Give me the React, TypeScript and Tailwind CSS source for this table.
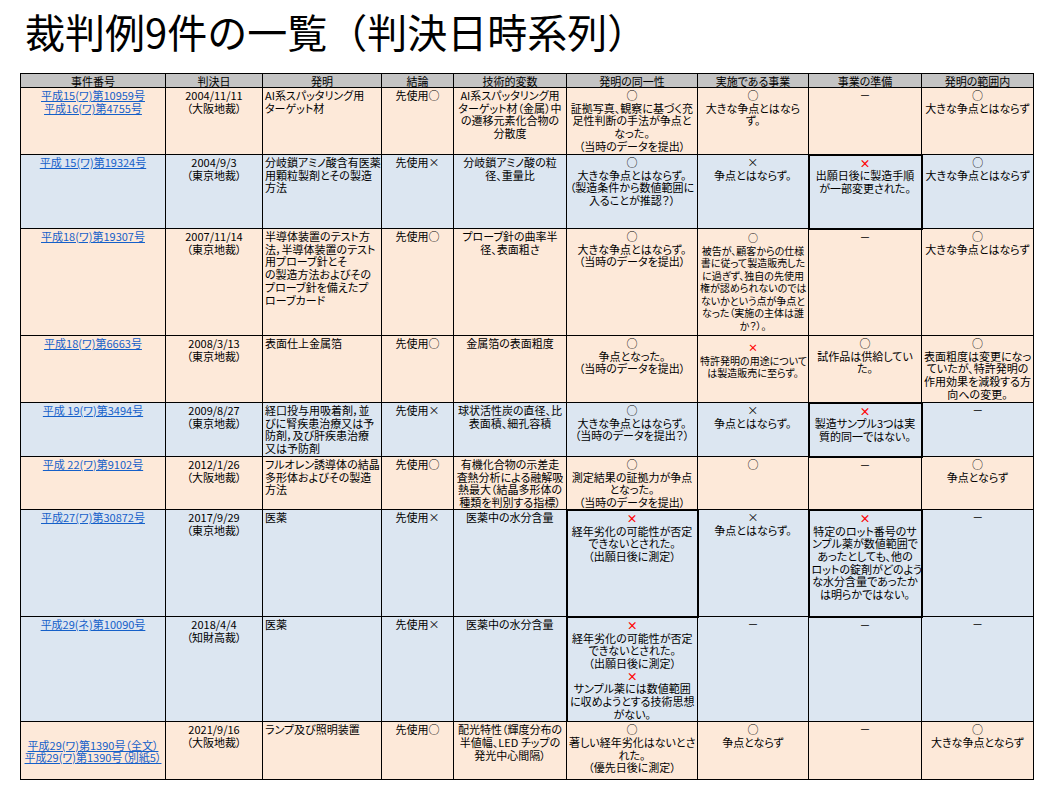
import React from "react";

type Cell = {
  l: string[];
  left?: boolean;
  extra?: string;
  small?: boolean;
};

type Row = {
  links: string[];
  linkMiddle?: boolean;
  bg: "peach" | "blue";
  h: string;
  cells: Cell[];
};

const headers = [
  "事件番号",
  "判決日",
  "発明",
  "結論",
  "技術的変数",
  "発明の同一性",
  "実施である事業",
  "事業の準備",
  "発明の範囲内",
];

const colWidths = [
  "w-[145px]",
  "w-[97px]",
  "w-[119px]",
  "w-[72px]",
  "w-[113px]",
  "w-[131px]",
  "w-[111px]",
  "w-[113px]",
  "w-[112px]",
];

// "R×" = red cross, everything else is plain text
const rows: Row[] = [
  {
    links: ["平成15(ワ)第10959号", "平成16(ワ)第4755号"],
    bg: "peach",
    h: "h-[67px]",
    cells: [
      { l: ["2004/11/11", "（大阪地裁）"] },
      { l: ["AI系スパッタリング用", "ターゲット材"], left: true },
      { l: ["先使用○"] },
      { l: ["AI系スパッタリング用", "ターゲット材（金属）中", "の遷移元素化合物の", "分散度"] },
      { l: ["○", "証拠写真、観察に基づく充", "足性判断の手法が争点と", "なった。", "（当時のデータを提出）"] },
      { l: ["○", "大きな争点とはなら", "ず。"] },
      { l: ["－"] },
      { l: ["○", "大きな争点とはならず"] },
    ],
  },
  {
    links: ["平成 15(ワ)第19324号"],
    bg: "blue",
    h: "h-[74px]",
    cells: [
      { l: ["2004/9/3", "（東京地裁）"] },
      { l: ["分岐鎖アミノ酸含有医薬", "用顆粒製剤とその製造", "方法"], left: true },
      { l: ["先使用×"] },
      { l: ["分岐鎖アミノ酸の粒", "径、重量比"] },
      { l: ["○", "大きな争点とはならず。", "（製造条件から数値範囲に", "入ることが推認？）"] },
      { l: ["×", "争点とはならず。"] },
      { l: ["R×", "出願日後に製造手順", "が一部変更された。"], extra: "border-2" },
      { l: ["○", "大きな争点とはならず"] },
    ],
  },
  {
    links: ["平成18(ワ)第19307号"],
    bg: "peach",
    h: "h-[107px]",
    cells: [
      { l: ["2007/11/14", "（東京地裁）"] },
      {
        l: [
          "半導体装置のテスト方",
          "法，半導体装置のテスト",
          "用プローブ針とそ",
          "の製造方法およびその",
          "プローブ針を備えたプ",
          "ローブカード",
        ],
        left: true,
      },
      { l: ["先使用○"] },
      { l: ["プローブ針の曲率半", "径、表面粗さ"] },
      { l: ["○", "大きな争点とはならず。", "（当時のデータを提出）"] },
      {
        l: [
          "○",
          "被告が、顧客からの仕様",
          "書に従って製造販売した",
          "に過ぎず、独自の先使用",
          "権が認められないのでは",
          "ないかという点が争点と",
          "なった（実施の主体は誰",
          "か？）。",
        ],
        small: true,
        extra: "pt-[3px]",
      },
      { l: ["－"] },
      { l: ["○", "大きな争点とはならず"] },
    ],
  },
  {
    links: ["平成18(ワ)第6663号"],
    bg: "peach",
    h: "h-[67px]",
    cells: [
      { l: ["2008/3/13", "（東京地裁）"] },
      { l: ["表面仕上金属箔"], left: true },
      { l: ["先使用○"] },
      { l: ["金属箔の表面粗度"] },
      { l: ["○", "争点となった。", "（当時のデータを提出）"] },
      { l: ["R×", "特許発明の用途について", "は製造販売に至らず。"], small: true, extra: "pt-[6px]" },
      { l: ["○", "試作品は供給してい", "た。"] },
      { l: ["○", "表面粗度は変更になっ", "ていたが、特許発明の", "作用効果を減殺する方", "向への変更。"] },
    ],
  },
  {
    links: ["平成 19(ワ)第3494号"],
    bg: "blue",
    h: "h-[54px]",
    cells: [
      { l: ["2009/8/27", "（東京地裁）"] },
      { l: ["経口投与用吸着剤，並", "びに腎疾患治療又は予", "防剤，及び肝疾患治療", "又は予防剤"], left: true },
      { l: ["先使用×"] },
      { l: ["球状活性炭の直径、比", "表面積、細孔容積"] },
      { l: ["○", "大きな争点とはならず。", "（当時のデータを提出？）"] },
      { l: ["×", "争点とはならず。"] },
      { l: ["R×", "製造サンプル3つは実", "質的同一ではない。"], extra: "border-2" },
      { l: ["－"] },
    ],
  },
  {
    links: ["平成 22(ワ)第9102号"],
    bg: "peach",
    h: "h-[52px]",
    cells: [
      { l: ["2012/1/26", "（大阪地裁）"] },
      { l: ["フルオレン誘導体の結晶", "多形体およびその製造", "方法"], left: true },
      { l: ["先使用○"] },
      { l: ["有機化合物の示差走", "査熱分析による融解吸", "熱最大（結晶多形体の", "種類を判別する指標）"] },
      { l: ["○", "測定結果の証拠力が争点", "となった。", "（当時のデータを提出）"] },
      { l: ["○"] },
      { l: ["－"] },
      { l: ["○", "争点とならず"] },
    ],
  },
  {
    links: ["平成27(ワ)第30872号"],
    bg: "blue",
    h: "h-[107px]",
    cells: [
      { l: ["2017/9/29", "（東京地裁）"] },
      { l: ["医薬"], left: true },
      { l: ["先使用×"] },
      { l: ["医薬中の水分含量"] },
      { l: ["R×", "経年劣化の可能性が否定", "できないとされた。", "（出願日後に測定）"], extra: "border-2" },
      { l: ["×", "争点とはならず。"] },
      {
        l: [
          "R×",
          "特定のロット番号のサ",
          "ンプル薬が数値範囲で",
          "あったとしても、他の",
          "ロットの錠剤がどのよう",
          "な水分含量であったか",
          "は明らかではない。",
        ],
        extra: "border-2",
      },
      { l: ["－"] },
    ],
  },
  {
    links: ["平成29(ネ)第10090号"],
    bg: "blue",
    h: "h-[105px]",
    cells: [
      { l: ["2018/4/4", "（知財高裁）"] },
      { l: ["医薬"], left: true },
      { l: ["先使用×"] },
      { l: ["医薬中の水分含量"] },
      {
        l: [
          "R×",
          "経年劣化の可能性が否定",
          "できないとされた。",
          "（出願日後に測定）",
          "R×",
          "サンプル薬には数値範囲",
          "に収めようとする技術思想",
          "がない。",
        ],
        extra: "border-l-2",
      },
      { l: ["－"] },
      { l: ["－"] },
      { l: ["－"] },
    ],
  },
  {
    links: ["平成29(ワ)第1390号（全文）", "平成29(ワ)第1390号（別紙5）"],
    linkMiddle: true,
    bg: "peach",
    h: "h-[58px]",
    cells: [
      { l: ["2021/9/16", "（大阪地裁）"] },
      { l: ["ランプ及び照明装置"], left: true },
      { l: ["先使用○"] },
      { l: ["配光特性（輝度分布の", "半値幅、LED チップの", "発光中心間隔）"] },
      { l: ["○", "著しい経年劣化はないとさ", "れた。", "（優先日後に測定）"] },
      { l: ["○", "争点とならず"] },
      { l: ["－"] },
      { l: ["○", "大きな争点とならず"] },
    ],
  },
];

const renderLine = (s: string, i: number) => {
  if (s === "R×")
    return (
      <div key={i} className="text-[#ff0000] font-bold">
        ×
      </div>
    );
  return <div key={i}>{s}</div>;
};

export default function App() {
  return (
    <div className="w-[1048px] h-[795px] bg-white overflow-hidden font-['Noto_Sans_CJK_JP',sans-serif] text-black [font-feature-settings:'palt']">
      <h1 className="pl-[25px] pt-[11px] h-[73px] text-[40px] leading-[40px] font-normal [font-feature-settings:normal]">
        裁判例9件の一覧（判決日時系列）
      </h1>
      <table className="ml-[20px] w-[1013px] table-fixed border-collapse text-[11px] leading-[12.7px]">
        <colgroup>
          {colWidths.map((w, i) => (
            <col key={i} className={w} />
          ))}
        </colgroup>
        <thead>
          <tr className="h-[14px]">
            {headers.map((h, i) => (
              <th
                key={i}
                className="border border-black bg-[#c4c4c4] font-normal p-0 text-center leading-[12px]"
              >
                {h}
              </th>
            ))}
          </tr>
        </thead>
        <tbody>
          {rows.map((r, ri) => {
            const bg = r.bg === "peach" ? "bg-[#fde9d9]" : "bg-[#dce6f1]";
            return (
              <tr key={ri} className={`${r.h} ${bg}`}>
                <td
                  className={`border border-black px-[2px] pt-[1px] text-center ${
                    r.linkMiddle ? "align-middle" : "align-top"
                  }`}
                >
                  {r.links.map((t, i) => (
                    <div key={i}>
                      <a className="text-[#1560c9] underline underline-offset-1 whitespace-nowrap cursor-pointer">
                        {t}
                      </a>
                    </div>
                  ))}
                </td>
                {r.cells.map((c, ci) => (
                  <td
                    key={ci}
                    className={`border border-black align-top px-[2px] pt-[1px] whitespace-nowrap overflow-hidden ${
                      c.left ? "text-left" : "text-center"
                    } ${c.small ? "text-[10px] leading-[12.5px]" : ""} ${c.extra ?? ""}`}
                  >
                    {c.l.map(renderLine)}
                  </td>
                ))}
              </tr>
            );
          })}
        </tbody>
      </table>
    </div>
  );
}
